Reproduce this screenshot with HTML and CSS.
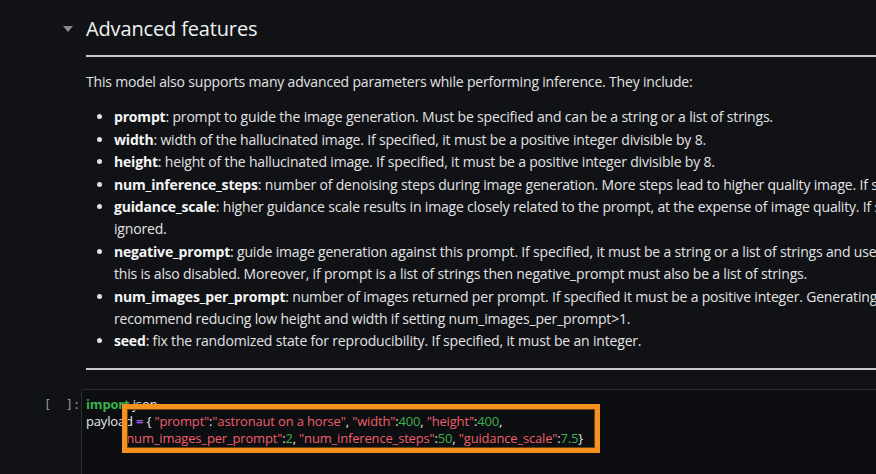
FILE: index.html
```html
<!DOCTYPE html>
<html>
<head>
<meta charset="utf-8">
<link rel="stylesheet" href="styles.css">
</head>
<body>
<div class="notebook">
  <section class="md-cell">
    <div class="gutter"><span class="caret"></span></div>
    <div class="md-body">
      <h2 class="title">Advanced features</h2>
      <hr class="rule">
      <p class="intro">This model also supports many advanced parameters while performing inference. They include:</p>
      <ul class="params">
        <li><b>prompt</b>: prompt to guide the image generation. Must be specified and can be a string or a list of strings.</li>
        <li><b>width</b>: width of the hallucinated image. If specified, it must be a positive integer divisible by 8.</li>
        <li><b>height</b>: height of the hallucinated image. If specified, it must be a positive integer divisible by 8.</li>
        <li><b>num_inference_steps</b>: number of denoising steps during image generation. More steps lead to higher quality image. If specified, it must a positive integer.</li>
        <li><b>guidance_scale</b>: higher guidance scale results in image closely related to the prompt, at the expense of image quality. If specified, it must be a float. guidance_scale&lt;=1 is<br>ignored.</li>
        <li><b>negative_prompt</b>: guide image generation against this prompt. If specified, it must be a string or a list of strings and used with guidance_scale. If guidance_scale is disabled,<br>this is also disabled. Moreover, if prompt is a list of strings then negative_prompt must also be a list of strings.</li>
        <li><b>num_images_per_prompt</b>: number of images returned per prompt. If specified it must be a positive integer. Generating multiple images per prompt is more efficient. We<br>recommend reducing low height and width if setting num_images_per_prompt&gt;1.</li>
        <li><b>seed</b>: fix the randomized state for reproducibility. If specified, it must be an integer.</li>
      </ul>
      <hr class="rule">
    </div>
  </section>
  <section class="code-cell">
    <div class="prompt">[&nbsp;&nbsp;]:</div>
    <div class="editor">
      <div class="code"><span class="kw">import</span> json
payload <span class="op">=</span> { <span class="str">"prompt"</span>:<span class="str">"astronaut on a horse"</span>, <span class="str">"width"</span>:<span class="num">400</span>, <span class="str">"height"</span>:<span class="num">400</span>,
           <span class="str">"num_images_per_prompt"</span>:<span class="num">2</span>, <span class="str">"num_inference_steps"</span>:<span class="num">50</span>, <span class="str">"guidance_scale"</span>:<span class="num">7.5</span>}</div>
      <div class="highlight"></div>
    </div>
  </section>
</div>
</body>
</html>
```
FILE: styles.css
```css
html, body {
  margin: 0;
  padding: 0;
  background: #101216;
  overflow: hidden;
}
body {
  width: 876px;
  height: 474px;
  font-family: "Open Sans", "Noto Sans", sans-serif;
  color: #e3e3e3;
}
.notebook {
  width: 1200px;
  display: flex;
  flex-direction: column;
}
.md-cell {
  display: grid;
  grid-template-columns: 86px 1fr;
}
.gutter {
  display: flex;
  justify-content: flex-end;
  padding-top: 26px;
  padding-right: 13px;
}
.caret {
  width: 0;
  height: 0;
  border-left: 5.5px solid transparent;
  border-right: 5.5px solid transparent;
  border-top: 6px solid #8a8a8a;
}
.md-body {
  padding-top: 15px;
}
.title {
  margin: 0;
  font-size: 20px;
  font-weight: 500;
  line-height: 28px;
  letter-spacing: -0.15px;
  color: #f2f2f2;
}
.rule {
  margin: 12px 0 0 0;
  border: 0;
  height: 2px;
  background: #c9c9c9;
}
.intro {
  margin: 14px 0 0 0;
  font-size: 14px;
  line-height: 22.4px;
  letter-spacing: -0.18px;
  white-space: nowrap;
}
.params {
  margin: 13px 0 0 0;
  padding-left: 28px;
  font-size: 14px;
  line-height: 22.4px;
  letter-spacing: -0.18px;
  white-space: nowrap;
}
.params b {
  font-weight: 700;
  color: #f5f5f5;
}
.params + .rule {
  margin-top: 15px;
}
.code-cell {
  display: grid;
  grid-template-columns: 81px 1fr;
  margin-top: 19px;
}
.prompt {
  font-family: "DejaVu Sans Mono", monospace;
  font-size: 12px;
  color: #9a9a9a;
  padding-top: 9px;
  padding-left: 44px;
}
.editor {
  position: relative;
  border: 1px solid #2b2e34;
  border-radius: 3px;
  background: #0c0e12;
  height: 120px;
  padding: 6px 0 0 4px;
}
.code {
  font-family: "Open Sans", "Noto Sans", sans-serif;
  font-size: 13px;
  line-height: 17px;
  letter-spacing: -0.17px;
  white-space: pre;
  color: #e6e6e6;
}
.kw { color: #34b34a; font-weight: 700; }
.op { color: #a85ff0; font-weight: 700; }
.str { color: #ef5f69; }
.num { color: #43b04f; }
.highlight {
  position: absolute;
  left: 40px;
  top: 14px;
  width: 468px;
  height: 39px;
  border: 5px solid #f6911f;
  box-shadow: inset 0 0 0 1px #6b4413;
}
```
